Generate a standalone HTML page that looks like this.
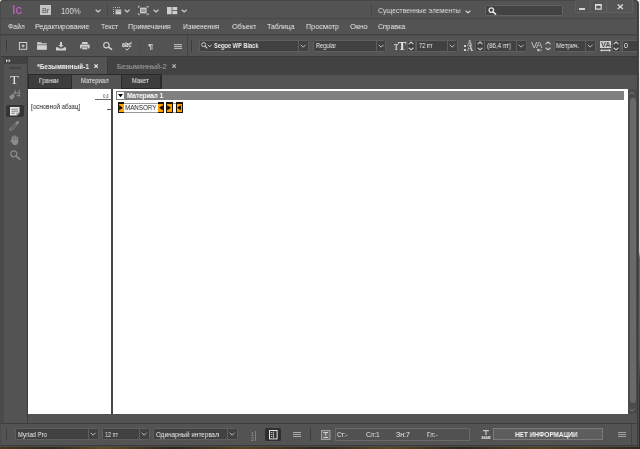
<!DOCTYPE html>
<html lang="ru"><head><meta charset="utf-8"><title>InCopy</title>
<style>
html,body{margin:0;padding:0;}
body{width:640px;height:449px;position:relative;overflow:hidden;background:linear-gradient(90deg,#4a3a1c 0%,#2e281c 8%,#5e4c24 16%,#2a261c 27%,#54431e 38%,#30291c 50%,#5a4822 61%,#2c271c 72%,#524220 84%,#2e281c 100%);}
div,span,svg{position:absolute;box-sizing:content-box;}
span{white-space:nowrap;line-height:1;transform-origin:0 50%;will-change:transform;}
svg{overflow:visible;}
</style></head><body>
<div style="left:638.7px;top:0px;width:1.3px;height:449px;background:linear-gradient(180deg,#f4f0ec 0%,#ead8d0 25%,#e6d2c8 56%,#6a6662 57.5%,#5c5a56 80%,#3a3428 86%,#2e2a1e 100%);"></div>
<div style="left:0px;top:0px;width:4px;height:4px;background:#f4f2ee;"></div>
<div style="left:634px;top:0px;width:6px;height:6px;background:#f4f0ec;"></div>
<div style="left:0px;top:0px;width:638.7px;height:447.3px;background:#4a4a4a;border-radius:3px 4px 0 0;"></div>
<div style="left:0.6px;top:0px;width:637.2px;height:446.2px;background:#3b3b3b;border-radius:3px 4px 0 0;"></div>
<div style="left:1.3px;top:0.5px;width:635.6px;height:444.8px;background:#535353;border-radius:2px 3px 0 0;"></div>
<div style="left:3px;top:0px;width:632px;height:1px;background:#474747;"></div>
<div style="left:1.3px;top:18px;width:635.6px;height:1px;background:#494949;"></div>
<span id="t0" style="left:11.7px;top:2.80px;font-size:13px;color:#c763c9;font-weight:normal;font-family:'Liberation Sans', sans-serif;transform:scaleX(0.9679);">Ic</span>
<div style="left:40px;top:5px;width:10.5px;height:10px;background:#c4c4c4;"></div>
<span id="t1" style="left:42px;top:6.71px;font-size:7.2px;color:#4c4c4c;font-weight:normal;font-family:'Liberation Sans', sans-serif;transform:scaleX(0.9739);">Br</span>
<span id="t2" style="left:60.6px;top:7.22px;font-size:8.6px;color:#dedede;font-weight:normal;font-family:'Liberation Sans', sans-serif;transform:scaleX(0.8915);">100%</span>
<svg style="left:95px;top:8.7px;" width="6.2" height="4" viewBox="0 0 6.2 4"><polyline points="1,1 3.1,3 5.2,1" fill="none" stroke="#cfcfcf" stroke-width="1.1" stroke-linecap="round" stroke-linejoin="round"/></svg>
<div style="left:107px;top:3px;width:1px;height:13px;background:#484848;"></div>
<svg style="left:113px;top:6.5px;" width="9" height="8" viewBox="0 0 9 8"><path d="M0.5,7V0.5H7.5" fill="none" stroke="#c8c8c8" stroke-width="0.9" stroke-dasharray="1,1"/><rect x="2.5" y="2.5" width="5.7" height="4.8" fill="#cdcdcd"/><path d="M2.5,4H8.2" stroke="#777" stroke-width="0.6"/></svg>
<svg style="left:123.7px;top:8.7px;" width="6.2" height="4" viewBox="0 0 6.2 4"><polyline points="1,1 3.1,3 5.2,1" fill="none" stroke="#cfcfcf" stroke-width="1.1" stroke-linecap="round" stroke-linejoin="round"/></svg>
<svg style="left:138px;top:6px;" width="11" height="9" viewBox="0 0 11 9"><rect x="2" y="1.6" width="6.6" height="5.8" fill="#c9c9c9"/><rect x="3" y="3" width="4.6" height="3" fill="#9a9a9a"/><path d="M0.4,2V0.4H2M8.6,0.4H10.2V2M10.2,7V8.6H8.6M2,8.6H0.4V7" fill="none" stroke="#c8c8c8" stroke-width="0.8"/></svg>
<svg style="left:152.5px;top:8.7px;" width="6.2" height="4" viewBox="0 0 6.2 4"><polyline points="1,1 3.1,3 5.2,1" fill="none" stroke="#cfcfcf" stroke-width="1.1" stroke-linecap="round" stroke-linejoin="round"/></svg>
<svg style="left:166.5px;top:6.5px;" width="11" height="8" viewBox="0 0 11 8"><rect x="0" y="0" width="4.6" height="7.2" fill="#cfcfcf"/><rect x="5.4" y="0" width="4.8" height="3.2" fill="#cfcfcf"/><rect x="5.4" y="4" width="4.8" height="3.2" fill="#cfcfcf"/></svg>
<svg style="left:181.3px;top:8.7px;" width="6.4" height="4" viewBox="0 0 6.4 4"><polyline points="1,1 3.2,3 5.4,1" fill="none" stroke="#cfcfcf" stroke-width="1.1" stroke-linecap="round" stroke-linejoin="round"/></svg>
<div style="left:371px;top:3px;width:1px;height:13px;background:#474747;"></div>
<span id="t3" style="left:377.7px;top:7.13px;font-size:8px;color:#dedede;font-weight:normal;font-family:'Liberation Sans', sans-serif;transform:scaleX(0.8679);">Существенные элементы</span>
<svg style="left:465px;top:9.5px;" width="6" height="3.9" viewBox="0 0 6 3.9"><polyline points="1,1 3.0,2.9 5,1" fill="none" stroke="#d8d8d8" stroke-width="1.1" stroke-linecap="round" stroke-linejoin="round"/></svg>
<div style="left:484.5px;top:4.6px;width:76.0px;height:9.0px;background:#434343;border:1px solid #626262;border-radius:1.5px;"></div>
<svg style="left:488px;top:6.5px;" width="9" height="8" viewBox="0 0 9 8"><circle cx="3.3" cy="3.1" r="2.3" fill="none" stroke="#e4e4e4" stroke-width="1.3"/><line x1="5" y1="4.8" x2="7.6" y2="7.2" stroke="#e4e4e4" stroke-width="1.6" stroke-linecap="round"/></svg>
<div style="left:575px;top:0px;width:58px;height:12.5px;background:#5e5e5e;"></div>
<div style="left:576px;top:0px;width:14px;height:11.5px;background:#555555;"></div>
<div style="left:591px;top:0px;width:14.5px;height:11.5px;background:#555555;"></div>
<div style="left:606.5px;top:0px;width:25.5px;height:11.5px;background:#555555;"></div>
<div style="left:578.5px;top:8px;width:6.5px;height:1.5px;background:#d4d4d4;"></div>
<svg style="left:594.5px;top:4px;" width="7" height="6" viewBox="0 0 7 6"><rect x="0.6" y="0.9" width="5.6" height="4.2" fill="none" stroke="#e0e0e0" stroke-width="1.2"/><rect x="0" y="0" width="6.8" height="1.4" fill="#e0e0e0"/></svg>
<svg style="left:616.5px;top:3.5px;" width="7" height="6" viewBox="0 0 7 6"><path d="M0.7,0.6L5.9,5.1M5.9,0.6L0.7,5.1" stroke="#dcdcdc" stroke-width="1.3" fill="none"/></svg>
<span id="t4" style="left:7.5px;top:22.53px;font-size:8px;color:#e8e8e8;font-weight:normal;font-family:'Liberation Sans', sans-serif;transform:scaleX(0.8591);">Файл</span>
<span id="t5" style="left:34.7px;top:22.53px;font-size:8px;color:#e8e8e8;font-weight:normal;font-family:'Liberation Sans', sans-serif;transform:scaleX(0.8908);">Редактирование</span>
<span id="t6" style="left:101px;top:22.53px;font-size:8px;color:#e8e8e8;font-weight:normal;font-family:'Liberation Sans', sans-serif;transform:scaleX(0.8441);">Текст</span>
<span id="t7" style="left:128.4px;top:22.53px;font-size:8px;color:#e8e8e8;font-weight:normal;font-family:'Liberation Sans', sans-serif;transform:scaleX(0.9223);">Примечания</span>
<span id="t8" style="left:182.8px;top:22.53px;font-size:8px;color:#e8e8e8;font-weight:normal;font-family:'Liberation Sans', sans-serif;transform:scaleX(0.8733);">Изменения</span>
<span id="t9" style="left:231.6px;top:22.53px;font-size:8px;color:#e8e8e8;font-weight:normal;font-family:'Liberation Sans', sans-serif;transform:scaleX(0.8954);">Объект</span>
<span id="t10" style="left:266.6px;top:22.53px;font-size:8px;color:#e8e8e8;font-weight:normal;font-family:'Liberation Sans', sans-serif;transform:scaleX(0.8733);">Таблица</span>
<span id="t11" style="left:306px;top:22.53px;font-size:8px;color:#e8e8e8;font-weight:normal;font-family:'Liberation Sans', sans-serif;transform:scaleX(0.9029);">Просмотр</span>
<span id="t12" style="left:350px;top:22.53px;font-size:8px;color:#e8e8e8;font-weight:normal;font-family:'Liberation Sans', sans-serif;transform:scaleX(0.9412);">Окно</span>
<span id="t13" style="left:378.4px;top:22.53px;font-size:8px;color:#e8e8e8;font-weight:normal;font-family:'Liberation Sans', sans-serif;transform:scaleX(0.8601);">Справка</span>
<div style="left:1.3px;top:34px;width:635.6px;height:1px;background:#424242;"></div>
<div style="left:1.3px;top:35px;width:635.6px;height:1px;background:#4a4a4a;"></div>
<div style="left:1.3px;top:56px;width:635.6px;height:1px;background:#3a3a3a;"></div>
<div style="left:6px;top:40px;width:1px;height:11px;background:#3c3c3c;"></div>
<div style="left:187px;top:36px;width:1px;height:20px;background:#434343;"></div>
<div style="left:191px;top:40px;width:1px;height:12px;background:#3c3c3c;"></div>
<div style="left:97px;top:39px;width:1px;height:14px;background:#4f4f4f;"></div>
<div style="left:138.5px;top:39px;width:1px;height:14px;background:#4d4d4d;"></div>
<svg style="left:19px;top:42px;" width="9" height="8" viewBox="0 0 9 8"><rect x="0.4" y="0.5" width="7.3" height="6.8" fill="none" stroke="#d0d0d0" stroke-width="1"/><path d="M4.05,2.4V5.4M2.5,3.9H5.6" stroke="#d0d0d0" stroke-width="1"/></svg>
<svg style="left:37px;top:42px;" width="10" height="8" viewBox="0 0 10 8"><path d="M0,0.3H4L5,1.3H9.8V2.4H0Z" fill="#d0d0d0"/><rect x="0" y="3.2" width="9.8" height="4.6" fill="#d0d0d0"/></svg>
<svg style="left:56px;top:41.5px;" width="10" height="9" viewBox="0 0 10 9"><path d="M4,0H6V3H7.6L5,5.6L2.4,3H4Z" fill="#d0d0d0"/><path d="M0,5.2H2L3.4,6.6H6.6L8,5.2H10V8.6H0Z" fill="#d0d0d0"/></svg>
<svg style="left:80px;top:42px;" width="10" height="8" viewBox="0 0 10 8"><rect x="2" y="0" width="5.6" height="2" fill="#d0d0d0"/><rect x="0" y="2.6" width="9.6" height="3.8" rx="0.6" fill="#d0d0d0"/><rect x="2" y="5" width="5.6" height="2.8" fill="#d0d0d0" stroke="#535353" stroke-width="0.6"/></svg>
<svg style="left:103px;top:42.3px;" width="10" height="8" viewBox="0 0 10 8"><circle cx="3.4" cy="3.2" r="2.7" fill="none" stroke="#d0d0d0" stroke-width="1.1"/><line x1="5.6" y1="5.2" x2="8.6" y2="7.4" stroke="#d0d0d0" stroke-width="1.5" stroke-linecap="round"/></svg>
<span id="t14" style="left:122.2px;top:42.01px;font-size:6.6px;color:#e2e2e2;font-weight:bold;font-family:'Liberation Sans', sans-serif;transform:scaleX(0.8440);">abc</span>
<svg style="left:121.5px;top:40.5px;" width="11" height="10" viewBox="0 0 11 10"><line x1="1" y1="6" x2="10" y2="1.2" stroke="#d0d0d0" stroke-width="0.8"/><path d="M3.6,7.6L5,9.2L7.4,6.6" fill="none" stroke="#d0d0d0" stroke-width="1"/></svg>
<span id="t15" style="left:148px;top:42.77px;font-size:7.6px;color:#d4d4d4;font-weight:bold;font-family:'Liberation Sans', sans-serif;transform:scaleX(1.2517);">¶</span>
<div style="left:174px;top:44px;width:8px;height:5px;background:#686868;"></div>
<div style="left:174px;top:44px;width:8px;height:1px;background:#b4b4b4;"></div>
<div style="left:174px;top:46px;width:8px;height:1px;background:#b4b4b4;"></div>
<div style="left:174px;top:48px;width:8px;height:1px;background:#b4b4b4;"></div>
<div style="left:199px;top:39.7px;width:108px;height:10.099999999999994px;background:#414141;border:1px solid #5f5f5f;border-radius:1.5px;"></div>
<div style="left:298px;top:40.7px;width:1px;height:10.099999999999994px;background:#5f5f5f;"></div>
<svg style="left:300.3px;top:43.85px;" width="6.4" height="4.2" viewBox="0 0 6.4 4.2"><polyline points="1,1 3.2,3.2 5.4,1" fill="none" stroke="#c6c6c6" stroke-width="0.9" stroke-linecap="round" stroke-linejoin="round"/></svg>
<svg style="left:200.8px;top:42.3px;" width="7" height="8" viewBox="0 0 7 8"><circle cx="2.6" cy="2.6" r="2" fill="none" stroke="#d8d8d8" stroke-width="0.9"/><line x1="4.1" y1="4.2" x2="6.2" y2="6.4" stroke="#d8d8d8" stroke-width="1.1"/></svg>
<svg style="left:206.8px;top:43.9px;" width="5.4" height="3.8" viewBox="0 0 5.4 3.8"><polyline points="1,1 2.7,2.8 4.4,1" fill="none" stroke="#d8d8d8" stroke-width="0.9" stroke-linecap="round" stroke-linejoin="round"/></svg>
<span id="t16" style="left:214px;top:43.39px;font-size:7.1px;color:#ececec;font-weight:bold;font-family:'Liberation Sans', sans-serif;transform:scaleX(0.8023);">Segoe WP Black</span>
<div style="left:313px;top:39.7px;width:71px;height:10.099999999999994px;background:#414141;border:1px solid #5f5f5f;border-radius:1.5px;"></div>
<div style="left:376px;top:40.7px;width:1px;height:10.099999999999994px;background:#5f5f5f;"></div>
<svg style="left:377.8px;top:43.85px;" width="6.4" height="4.2" viewBox="0 0 6.4 4.2"><polyline points="1,1 3.2,3.2 5.4,1" fill="none" stroke="#c6c6c6" stroke-width="0.9" stroke-linecap="round" stroke-linejoin="round"/></svg>
<span id="t17" style="left:315.5px;top:43.39px;font-size:7.1px;color:#ececec;font-weight:normal;font-family:'Liberation Sans', sans-serif;transform:scaleX(0.8050);">Regular</span>
<span id="t18" style="left:394px;top:44.04px;font-size:7.4px;color:#e4e4e4;font-weight:bold;font-family:'Liberation Serif', serif;transform:scaleX(0.8709);">T</span>
<span id="t19" style="left:397.5px;top:39.80px;font-size:12.4px;color:#e4e4e4;font-weight:bold;font-family:'Liberation Serif', serif;transform:scaleX(0.9679);">T</span>
<div style="left:406.6px;top:39.7px;width:7.899999999999977px;height:10.099999999999994px;background:#3f3f3f;border:1px solid #5c5c5c;border-radius:1px 0 0 1px;"></div>
<svg style="left:408.45px;top:41.400000000000006px;" width="6.2" height="3.8" viewBox="0 0 6.2 3.8"><polyline points="1,2.8 3.1,1 5.2,2.8" fill="none" stroke="#cecece" stroke-width="1.1" stroke-linecap="round" stroke-linejoin="round"/></svg>
<svg style="left:408.45px;top:47.099999999999994px;" width="6.2" height="3.8" viewBox="0 0 6.2 3.8"><polyline points="1,1 3.1,2.8 5.2,1" fill="none" stroke="#cecece" stroke-width="1.1" stroke-linecap="round" stroke-linejoin="round"/></svg>
<div style="left:415.5px;top:39.7px;width:40.5px;height:10.099999999999994px;background:#414141;border:1px solid #5f5f5f;border-radius:1.5px;"></div>
<div style="left:447px;top:40.7px;width:1px;height:10.099999999999994px;background:#5f5f5f;"></div>
<svg style="left:449.3px;top:43.85px;" width="6.4" height="4.2" viewBox="0 0 6.4 4.2"><polyline points="1,1 3.2,3.2 5.4,1" fill="none" stroke="#c6c6c6" stroke-width="0.9" stroke-linecap="round" stroke-linejoin="round"/></svg>
<span id="t20" style="left:419px;top:43.39px;font-size:7.1px;color:#ececec;font-weight:normal;font-family:'Liberation Sans', sans-serif;transform:scaleX(0.7963);">72 пт</span>
<span id="t21" style="left:467.3px;top:40.33px;font-size:8px;color:#cacaca;font-weight:bold;font-family:'Liberation Serif', serif;transform:scaleX(0.8822);">A</span>
<span id="t22" style="left:466.8px;top:44.63px;font-size:8px;color:#cacaca;font-weight:bold;font-family:'Liberation Serif', serif;transform:scaleX(1.0551);">A</span>
<div style="left:463.8px;top:45.4px;width:2px;height:1.6px;background:#d0d0d0;"></div>
<div style="left:463.8px;top:49.4px;width:2px;height:1.6px;background:#d0d0d0;"></div>
<div style="left:475px;top:39.7px;width:7.5px;height:10.099999999999994px;background:#3f3f3f;border:1px solid #5c5c5c;border-radius:1px 0 0 1px;"></div>
<svg style="left:476.65px;top:41.400000000000006px;" width="6.2" height="3.8" viewBox="0 0 6.2 3.8"><polyline points="1,2.8 3.1,1 5.2,2.8" fill="none" stroke="#cecece" stroke-width="1.1" stroke-linecap="round" stroke-linejoin="round"/></svg>
<svg style="left:476.65px;top:47.099999999999994px;" width="6.2" height="3.8" viewBox="0 0 6.2 3.8"><polyline points="1,1 3.1,2.8 5.2,1" fill="none" stroke="#cecece" stroke-width="1.1" stroke-linecap="round" stroke-linejoin="round"/></svg>
<div style="left:484px;top:39.7px;width:41px;height:10.099999999999994px;background:#414141;border:1px solid #5f5f5f;border-radius:1.5px;"></div>
<div style="left:516px;top:40.7px;width:1px;height:10.099999999999994px;background:#5f5f5f;"></div>
<svg style="left:518.3px;top:43.85px;" width="6.4" height="4.2" viewBox="0 0 6.4 4.2"><polyline points="1,1 3.2,3.2 5.4,1" fill="none" stroke="#c6c6c6" stroke-width="0.9" stroke-linecap="round" stroke-linejoin="round"/></svg>
<span id="t23" style="left:487px;top:43.39px;font-size:7.1px;color:#ececec;font-weight:normal;font-family:'Liberation Sans', sans-serif;transform:scaleX(0.8698);">(86,4 пт)</span>
<span id="t24" style="left:530.7px;top:40.36px;font-size:9.5px;color:#c6c6c6;font-weight:normal;font-family:'Liberation Sans', sans-serif;transform:scaleX(0.9931);">V</span>
<span id="t25" style="left:535.6px;top:40.36px;font-size:9.5px;color:#c6c6c6;font-weight:normal;font-family:'Liberation Sans', sans-serif;transform:scaleX(1.0089);">A</span>
<svg style="left:536.8px;top:49px;" width="5" height="2.2" viewBox="0 0 5 2.2"><path d="M0,1.1L1.8,0V2.2ZM1.8,1.1H4.8" fill="#d0d0d0" stroke="#d0d0d0" stroke-width="0.7"/></svg>
<svg style="left:544.8000000000001px;top:41.400000000000006px;" width="6.2" height="3.8" viewBox="0 0 6.2 3.8"><polyline points="1,2.8 3.1,1 5.2,2.8" fill="none" stroke="#cecece" stroke-width="1.1" stroke-linecap="round" stroke-linejoin="round"/></svg>
<svg style="left:544.8000000000001px;top:47.099999999999994px;" width="6.2" height="3.8" viewBox="0 0 6.2 3.8"><polyline points="1,1 3.1,2.8 5.2,1" fill="none" stroke="#cecece" stroke-width="1.1" stroke-linecap="round" stroke-linejoin="round"/></svg>
<div style="left:553.5px;top:39.7px;width:40.0px;height:10.099999999999994px;background:#414141;border:1px solid #5f5f5f;border-radius:1.5px;"></div>
<div style="left:584.5px;top:40.7px;width:1px;height:10.099999999999994px;background:#5f5f5f;"></div>
<svg style="left:586.8px;top:43.85px;" width="6.4" height="4.2" viewBox="0 0 6.4 4.2"><polyline points="1,1 3.2,3.2 5.4,1" fill="none" stroke="#c6c6c6" stroke-width="0.9" stroke-linecap="round" stroke-linejoin="round"/></svg>
<span id="t26" style="left:556px;top:43.39px;font-size:7.1px;color:#ececec;font-weight:normal;font-family:'Liberation Sans', sans-serif;transform:scaleX(0.8857);">Метрич.</span>
<div style="left:600px;top:41.2px;width:10.8px;height:6.6px;background:#d2d2d2;"></div>
<span id="t27" style="left:600.8px;top:40.85px;font-size:7.5px;color:#444;font-weight:bold;font-family:'Liberation Sans', sans-serif;transform:scaleX(0.9519);">VA</span>
<svg style="left:599.8px;top:48.9px;" width="11" height="2.8" viewBox="0 0 11 2.8"><path d="M1,1.4H10" stroke="#cfcfcf" stroke-width="1.3"/><path d="M0,1.4L2,0V2.8ZM11,1.4L9,0V2.8Z" fill="#d4d4d4"/></svg>
<div style="left:611.5px;top:39.7px;width:7.5px;height:10.099999999999994px;background:#3f3f3f;border:1px solid #5c5c5c;border-radius:1px 0 0 1px;"></div>
<svg style="left:613.15px;top:41.400000000000006px;" width="6.2" height="3.8" viewBox="0 0 6.2 3.8"><polyline points="1,2.8 3.1,1 5.2,2.8" fill="none" stroke="#cecece" stroke-width="1.1" stroke-linecap="round" stroke-linejoin="round"/></svg>
<svg style="left:613.15px;top:47.099999999999994px;" width="6.2" height="3.8" viewBox="0 0 6.2 3.8"><polyline points="1,1 3.1,2.8 5.2,1" fill="none" stroke="#cecece" stroke-width="1.1" stroke-linecap="round" stroke-linejoin="round"/></svg>
<div style="left:622px;top:39.7px;width:14.5px;height:10.099999999999994px;background:#414141;border:1px solid #5f5f5f;border-right:none;"></div>
<div style="left:636.9px;top:39px;width:2px;height:14px;background:#3b3b3b;"></div>
<div style="left:637.5px;top:39px;width:1.2px;height:14px;background:#4a4a4a;"></div>
<span id="t28" style="left:624px;top:43.39px;font-size:7.1px;color:#f0f0f0;font-weight:normal;font-family:'Liberation Sans', sans-serif;transform:scaleX(1.0119);">0</span>
<div style="left:1px;top:57px;width:2.5px;height:366px;background:#4a4a4a;"></div>
<div style="left:3.5px;top:57px;width:23px;height:7px;background:#424242;"></div>
<div style="left:26.5px;top:57px;width:1.5px;height:366px;background:#3c3c3c;"></div>
<svg style="left:6px;top:59.2px;" width="6" height="4" viewBox="0 0 6 4"><path d="M0,0L2,1.7L0,3.4ZM2.6,0L4.6,1.7L2.6,3.4Z" fill="#d4d4d4"/></svg>
<div style="left:8.5px;top:66.5px;width:12px;height:2px;background:#454545;"></div>
<span id="t29" style="left:10.3px;top:73.23px;font-size:13.2px;color:#e2e2e2;font-weight:normal;font-family:'Liberation Serif', serif;transform:scaleX(1.0791);">T</span>
<svg style="left:9px;top:88px;" width="12" height="12" viewBox="0 0 12 12"><path d="M4.4,5H11.2M10.2,1.6V8.6M7.5,7.6H11.2M6.3,2.4V6" stroke="#8e8e8e" stroke-width="1" fill="none"/><path d="M0.2,8.2L4.6,5.6L5.8,8.4L3.4,11.6L1.2,11Z" fill="#8c8c8c"/></svg>
<div style="left:6px;top:104.5px;width:17.5px;height:12.5px;background:#353535;border-radius:2px;"></div>
<svg style="left:10px;top:107px;" width="10" height="9" viewBox="0 0 10 9"><path d="M0,0H9.5V6L7,8.5H0Z" fill="#e6e6e6"/><path d="M1.5,2.2H8M1.5,4.2H8M1.5,6.2H5" stroke="#555" stroke-width="0.7"/><path d="M7,8.5V6H9.5" fill="none" stroke="#555" stroke-width="0.6"/></svg>
<svg style="left:9px;top:121px;" width="11" height="10" viewBox="0 0 11 10"><path d="M0.8,9.2L1.6,7L6,2.6L7.6,4.2L3.2,8.6Z" fill="none" stroke="#8c8c8c" stroke-width="1"/><path d="M6.3,1.8L8,0.3Q9.3,-0.3 10,0.8Q10.4,1.8 9.4,2.6L8,4Z" fill="#8c8c8c"/></svg>
<svg style="left:9.5px;top:135px;" width="10" height="10.5" viewBox="0 0 10 10.5"><path d="M2.4,5.6V2M4.1,5V0.8M5.8,5V1.1M7.5,5.5V2.3" stroke="#8c8c8c" stroke-width="1.3" stroke-linecap="round" fill="none"/><path d="M1.8,5H8.2V7.3Q8,9.8 5.5,10.2Q3.2,10.2 2,8L0.2,5.4Q0.6,4.5 1.6,5.3Z" fill="#8c8c8c"/></svg>
<svg style="left:10px;top:150px;" width="11" height="10" viewBox="0 0 11 10"><circle cx="3.8" cy="3.8" r="3" fill="none" stroke="#8c8c8c" stroke-width="1.2"/><line x1="6.2" y1="6.1" x2="9.6" y2="9.2" stroke="#8c8c8c" stroke-width="1.7" stroke-linecap="round"/></svg>
<div style="left:28px;top:57px;width:608.9px;height:18px;background:#424242;"></div>
<div style="left:28px;top:57px;width:79.5px;height:17px;background:#535353;"></div>
<div style="left:107px;top:57px;width:1px;height:17px;background:#3a3a3a;"></div>
<span id="t30" style="left:36.6px;top:63.18px;font-size:7.7px;color:#f4f4f4;font-weight:bold;font-family:'Liberation Sans', sans-serif;transform:scaleX(0.8557);">*Безымянный-1</span>
<svg style="left:94px;top:64.2px;" width="4" height="4" viewBox="0 0 4 4"><path d="M0.4,0.4L3.8,3.8M3.8,0.4L0.4,3.8" stroke="#ececec" stroke-width="1.15"/></svg>
<span id="t31" style="left:117px;top:63.18px;font-size:7.7px;color:#a6a6a6;font-weight:normal;font-family:'Liberation Sans', sans-serif;transform:scaleX(0.9376);">Безымянный-2</span>
<svg style="left:172.3px;top:64.2px;" width="4" height="4" viewBox="0 0 4 4"><path d="M0.4,0.4L3.8,3.8M3.8,0.4L0.4,3.8" stroke="#b4b4b4" stroke-width="1.15"/></svg>
<div style="left:28px;top:75px;width:608.9px;height:14px;background:#535353;"></div>
<div style="left:28px;top:74px;width:133.5px;height:1px;background:#2a2a2a;"></div>
<div style="left:28.4px;top:74px;width:43.5px;height:14.8px;background:#2a2a2a;"></div>
<div style="left:29.2px;top:75px;width:41.6px;height:12.6px;background:#3d3d3d;"></div>
<div style="left:120.6px;top:74px;width:41px;height:14.8px;background:#2a2a2a;"></div>
<div style="left:121.6px;top:75px;width:38.8px;height:12.6px;background:#3d3d3d;"></div>
<span id="t32" style="left:38.5px;top:77.71px;font-size:6.6px;color:#f0f0f0;font-weight:normal;font-family:'Liberation Sans', sans-serif;transform:scaleX(0.9398);">Гранки</span>
<span id="t33" style="left:81.2px;top:77.71px;font-size:6.6px;color:#f0f0f0;font-weight:normal;font-family:'Liberation Sans', sans-serif;transform:scaleX(0.9059);">Материал</span>
<span id="t34" style="left:132px;top:77.71px;font-size:6.6px;color:#f0f0f0;font-weight:normal;font-family:'Liberation Sans', sans-serif;transform:scaleX(0.8837);">Макет</span>
<div style="left:28px;top:88.7px;width:600px;height:325.5px;background:#ffffff;"></div>
<div style="left:110.8px;top:88.7px;width:2.2px;height:325.5px;background:#474747;"></div>
<div style="left:628px;top:88.7px;width:8.9px;height:325.5px;background:#4b4b4b;"></div>
<div style="left:629.5px;top:97.5px;width:6.3px;height:305px;background:#696969;border-radius:3px;"></div>
<svg style="left:629.2px;top:91.4px;" width="6" height="4" viewBox="0 0 6 4"><polyline points="1,3 3.0,1 5,3" fill="none" stroke="#808080" stroke-width="0.9" stroke-linecap="round" stroke-linejoin="round"/></svg>
<svg style="left:629.2px;top:408.2px;" width="6" height="4" viewBox="0 0 6 4"><polyline points="1,1 3.0,3 5,1" fill="none" stroke="#808080" stroke-width="0.9" stroke-linecap="round" stroke-linejoin="round"/></svg>
<div style="left:116px;top:91.3px;width:508px;height:8.5px;background:#808080;"></div>
<div style="left:117px;top:92.2px;width:7.2px;height:6.7px;background:#ffffff;"></div>
<svg style="left:118px;top:94px;" width="5" height="3.4" viewBox="0 0 5 3.4"><path d="M0,0H5L2.5,3.3Z" fill="#000"/></svg>
<span id="t35" style="left:126.5px;top:92.99px;font-size:7.1px;color:#ffffff;font-weight:bold;font-family:'Liberation Sans', sans-serif;transform:scaleX(0.8927);">Материал 1</span>
<span id="t36" style="left:103.3px;top:94.71px;font-size:4.6px;color:#444;font-weight:normal;font-family:'Liberation Sans', sans-serif;transform:scaleX(0.8919);">0,0</span>
<div style="left:95px;top:99px;width:15.8px;height:1px;background:#6a6a6a;"></div>
<div style="left:107px;top:109px;width:3.8px;height:1px;background:#555;"></div>
<span id="t37" style="left:30.9px;top:103.56px;font-size:6.9px;color:#222;font-weight:normal;font-family:'Liberation Sans', sans-serif;transform:scaleX(0.9030);">[основной абзац]</span>
<div style="left:118px;top:102px;width:6.299999999999997px;height:11px;background:#201408;"></div>
<div style="left:118.7px;top:103.5px;width:4.899999999999997px;height:8.7px;background:#ffa100;"></div>
<svg style="left:119.05000000000001px;top:105.2px;" width="4.2" height="5.4" viewBox="0 0 4.2 5.4"><path d="M0.2,0.2L3.8,2.7L0.2,5.2Z" fill="#000"/></svg>
<div style="left:124.3px;top:103px;width:33.5px;height:0.8px;background:#999;"></div>
<div style="left:124.3px;top:112.2px;width:33.5px;height:0.8px;background:#999;"></div>
<span id="t38" style="left:125.2px;top:104.23px;font-size:8px;color:#1a1a1a;font-weight:normal;font-family:'Liberation Sans', sans-serif;transform:scaleX(0.7789);">MANSORY</span>
<div style="left:157.7px;top:102px;width:6.300000000000011px;height:11px;background:#201408;"></div>
<div style="left:158.39999999999998px;top:103.5px;width:4.900000000000011px;height:8.7px;background:#ffa100;"></div>
<svg style="left:158.75px;top:105.2px;" width="4.2" height="5.4" viewBox="0 0 4.2 5.4"><path d="M3.8,0.2L0.2,2.7L3.8,5.2Z" fill="#000"/></svg>
<div style="left:166px;top:102px;width:6.5px;height:11px;background:#201408;"></div>
<div style="left:166.7px;top:103.5px;width:5.1px;height:8.7px;background:#ffa100;"></div>
<svg style="left:167.15px;top:105.2px;" width="4.2" height="5.4" viewBox="0 0 4.2 5.4"><path d="M0.2,0.2L3.8,2.7L0.2,5.2Z" fill="#000"/></svg>
<div style="left:172.5px;top:103px;width:4px;height:0.8px;background:#999;"></div>
<div style="left:172.5px;top:112.2px;width:4px;height:0.8px;background:#999;"></div>
<div style="left:176.3px;top:102px;width:6.299999999999983px;height:11px;background:#201408;"></div>
<div style="left:177.0px;top:103.5px;width:4.899999999999983px;height:8.7px;background:#ffa100;"></div>
<svg style="left:177.35px;top:105.2px;" width="4.2" height="5.4" viewBox="0 0 4.2 5.4"><path d="M3.8,0.2L0.2,2.7L3.8,5.2Z" fill="#000"/></svg>
<div style="left:1.3px;top:423px;width:635.6px;height:1px;background:#3e3e3e;"></div>
<div style="left:6px;top:429px;width:1px;height:11px;background:#3e3e3e;"></div>
<div style="left:15.3px;top:428px;width:81.7px;height:10px;background:#414141;border:1px solid #5f5f5f;border-radius:1.5px;"></div>
<div style="left:88px;top:429px;width:1px;height:10px;background:#5f5f5f;"></div>
<svg style="left:90.3px;top:432.1px;" width="6.4" height="4.2" viewBox="0 0 6.4 4.2"><polyline points="1,1 3.2,3.2 5.4,1" fill="none" stroke="#c6c6c6" stroke-width="0.9" stroke-linecap="round" stroke-linejoin="round"/></svg>
<span id="t39" style="left:17.5px;top:431.27px;font-size:7px;color:#ececec;font-weight:normal;font-family:'Liberation Sans', sans-serif;transform:scaleX(0.8569);">Myriad Pro</span>
<div style="left:102px;top:428px;width:46px;height:10px;background:#414141;border:1px solid #5f5f5f;border-radius:1.5px;"></div>
<div style="left:139px;top:429px;width:1px;height:10px;background:#5f5f5f;"></div>
<svg style="left:141.3px;top:432.1px;" width="6.4" height="4.2" viewBox="0 0 6.4 4.2"><polyline points="1,1 3.2,3.2 5.4,1" fill="none" stroke="#c6c6c6" stroke-width="0.9" stroke-linecap="round" stroke-linejoin="round"/></svg>
<span id="t40" style="left:105px;top:431.27px;font-size:7px;color:#ececec;font-weight:normal;font-family:'Liberation Sans', sans-serif;transform:scaleX(0.7768);">12 пт</span>
<div style="left:153px;top:428px;width:83px;height:10px;background:#414141;border:1px solid #5f5f5f;border-radius:1.5px;"></div>
<div style="left:227px;top:429px;width:1px;height:10px;background:#5f5f5f;"></div>
<svg style="left:229.3px;top:432.1px;" width="6.4" height="4.2" viewBox="0 0 6.4 4.2"><polyline points="1,1 3.2,3.2 5.4,1" fill="none" stroke="#c6c6c6" stroke-width="0.9" stroke-linecap="round" stroke-linejoin="round"/></svg>
<span id="t41" style="left:156px;top:431.27px;font-size:7px;color:#ececec;font-weight:normal;font-family:'Liberation Sans', sans-serif;transform:scaleX(0.8929);">Одинарный интервал</span>
<span id="t42" style="left:250.8px;top:432.26px;font-size:5.6px;color:#9a9a9a;font-weight:normal;font-family:'Liberation Sans', sans-serif;transform:scaleX(0.8960);">1</span>
<span id="t43" style="left:250.8px;top:437.26px;font-size:5.6px;color:#9a9a9a;font-weight:normal;font-family:'Liberation Sans', sans-serif;transform:scaleX(0.8960);">2</span>
<div style="left:255px;top:431px;width:1px;height:10px;background:#808080;"></div>
<div style="left:265px;top:428px;width:15.5px;height:13px;background:#2f2f2f;border-radius:1.5px;"></div>
<svg style="left:268.5px;top:430px;" width="9" height="9.5" viewBox="0 0 9 9.5"><rect x="0.5" y="0.5" width="7.6" height="8.4" fill="none" stroke="#e6e6e6" stroke-width="1"/><path d="M1.8,2.5H3.4M1.8,4.5H3.4M1.8,6.5H3.4" stroke="#e6e6e6" stroke-width="0.8"/><path d="M4.6,1.5V8" stroke="#e6e6e6" stroke-width="0.7"/></svg>
<div style="left:292.5px;top:432px;width:8px;height:1.1px;background:#ababab;"></div>
<div style="left:292.5px;top:434px;width:8px;height:1.1px;background:#ababab;"></div>
<div style="left:292.5px;top:436px;width:8px;height:1.1px;background:#ababab;"></div>
<div style="left:309.6px;top:428px;width:1px;height:13px;background:#3e3e3e;"></div>
<svg style="left:321px;top:430px;" width="10" height="10" viewBox="0 0 10 10"><rect x="0.5" y="0.5" width="8.5" height="9" fill="#6c6c6c" stroke="#a0a0a0" stroke-width="1"/><path d="M2.5,2.5H7M4.75,2.5V5.5M2.5,7.5H7" stroke="#d4d4d4" stroke-width="1"/></svg>
<div style="left:335px;top:428px;width:133px;height:11px;background:#515151;border:1px solid #6a6a6a;"></div>
<span id="t44" style="left:337px;top:431.27px;font-size:7px;color:#ececec;font-weight:normal;font-family:'Liberation Sans', sans-serif;transform:scaleX(0.8369);">Ст:-</span>
<span id="t45" style="left:366px;top:431.27px;font-size:7px;color:#ececec;font-weight:normal;font-family:'Liberation Sans', sans-serif;transform:scaleX(0.9009);">Сл:1</span>
<span id="t46" style="left:396px;top:431.27px;font-size:7px;color:#ececec;font-weight:normal;font-family:'Liberation Sans', sans-serif;transform:scaleX(0.9686);">Зн:7</span>
<span id="t47" style="left:427px;top:431.27px;font-size:7px;color:#ececec;font-weight:normal;font-family:'Liberation Sans', sans-serif;transform:scaleX(0.8924);">Гл:-</span>
<svg style="left:481px;top:430px;" width="10" height="10" viewBox="0 0 10 10"><path d="M2,0.6H8M5,0.6V5" stroke="#c6c6c6" stroke-width="1.2"/><rect x="0.5" y="6" width="9" height="3" fill="#b4b4b4"/><path d="M2.5,6V7.5M4.5,6V7.5M6.5,6V7.5" stroke="#555" stroke-width="0.6"/></svg>
<div style="left:493px;top:428px;width:108px;height:10px;background:#5d5d5d;border:1px solid #7a7a7a;"></div>
<span id="t48" style="left:515.3px;top:431.27px;font-size:7px;color:#f4f4f4;font-weight:bold;font-family:'Liberation Sans', sans-serif;transform:scaleX(0.9179);">НЕТ ИНФОРМАЦИИ</span>
<div style="left:618px;top:432px;width:7.5px;height:1.1px;background:#a2a2a2;"></div>
<div style="left:618px;top:434px;width:7.5px;height:1.1px;background:#a2a2a2;"></div>
<div style="left:618px;top:436px;width:7.5px;height:1.1px;background:#a2a2a2;"></div>
<div style="left:631px;top:424px;width:1px;height:21.3px;background:#444444;"></div>
</body></html>
